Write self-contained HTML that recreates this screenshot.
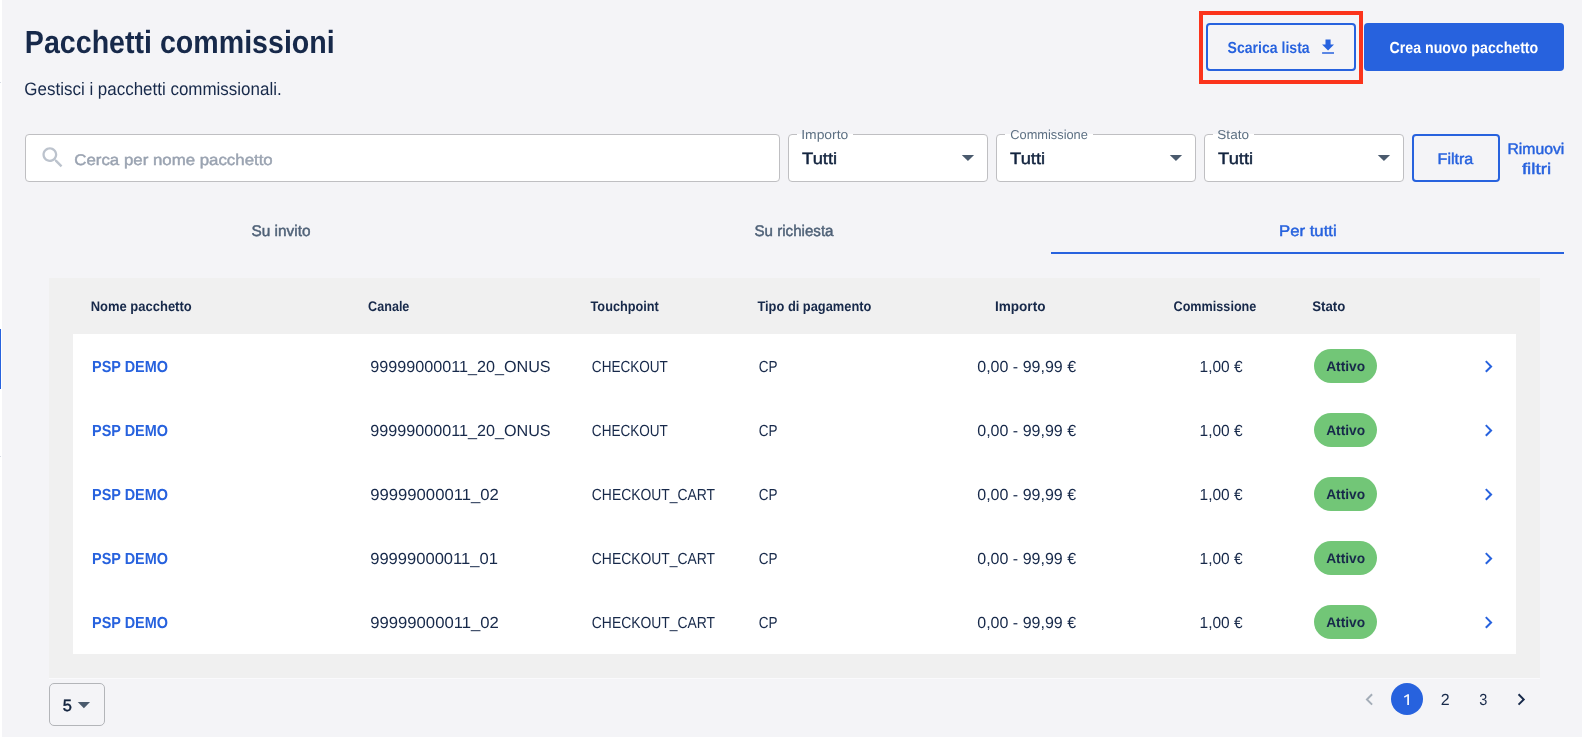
<!DOCTYPE html>
<html lang="it"><head><meta charset="utf-8"><title>Pacchetti commissioni</title>
<style>
html,body{margin:0;padding:0}
body{width:1582px;height:737px;overflow:hidden;position:relative;background:#f4f4f7;font-family:"Liberation Sans",sans-serif}
body>div,body>svg{position:absolute;box-sizing:content-box;display:block}
#tx{left:0;top:0;width:1582px;height:737px;will-change:transform}
#tx span{position:absolute;display:block;white-space:nowrap;transform-origin:0 0;text-rendering:geometricPrecision}
</style></head><body>

<div style="left:0;top:0;width:1.8px;height:737px;background:#fff"></div>
<div style="left:0;top:329px;width:1.2px;height:60px;background:#2762de"></div>
<div style="left:0;top:82px;width:1.3px;height:1px;background:#d6dbe4"></div>
<div style="left:0;top:456px;width:1.3px;height:1px;background:#d6dbe4"></div>
<div style="left:1199px;top:11px;width:156px;height:65px;border:4px solid #fb341c"></div>
<div style="left:1206px;top:23px;width:146px;height:44px;border:2px solid #2762de;border-radius:4px"></div>
<div style="left:1364px;top:23px;width:200px;height:48px;background:#2762de;border-radius:4px"></div>
<div style="left:25px;top:134px;width:753px;height:46px;border:1px solid #bfbfc2;border-radius:4px;background:#fff"></div>
<div style="left:788px;top:134px;width:198px;height:46px;border:1px solid #bfbfc2;border-radius:4px;background:#fff"></div>
<div style="left:796.9px;top:134px;width:56.1px;height:1px;background:#fff"></div>
<div style="left:796.9px;top:126px;width:56.1px;height:8px;background:#f4f4f7"></div>
<div style="left:996px;top:134px;width:198px;height:46px;border:1px solid #bfbfc2;border-radius:4px;background:#fff"></div>
<div style="left:1004.9px;top:134px;width:88.3px;height:1px;background:#fff"></div>
<div style="left:1004.9px;top:126px;width:88.3px;height:8px;background:#f4f4f7"></div>
<div style="left:1204px;top:134px;width:198px;height:46px;border:1px solid #bfbfc2;border-radius:4px;background:#fff"></div>
<div style="left:1212.9px;top:134px;width:41.1px;height:1px;background:#fff"></div>
<div style="left:1212.9px;top:126px;width:41.1px;height:8px;background:#f4f4f7"></div>
<div style="left:1412px;top:134px;width:84px;height:44px;border:2px solid #2762de;border-radius:4px"></div>
<div style="left:1051px;top:252px;width:513px;height:2px;background:#2762de"></div>
<div style="left:49px;top:278px;width:1491px;height:400px;background:#f0f0f0"></div>
<div style="left:49px;top:678px;width:1491px;height:1px;background:#fafafc"></div>
<div style="left:73px;top:334px;width:1443px;height:320px;background:#fff"></div>
<div style="left:1314px;top:349px;width:63.3px;height:34px;border-radius:17px;background:#72c677"></div>
<div style="left:1314px;top:413px;width:63.3px;height:34px;border-radius:17px;background:#72c677"></div>
<div style="left:1314px;top:477px;width:63.3px;height:34px;border-radius:17px;background:#72c677"></div>
<div style="left:1314px;top:541px;width:63.3px;height:34px;border-radius:17px;background:#72c677"></div>
<div style="left:1314px;top:605px;width:63.3px;height:34px;border-radius:17px;background:#72c677"></div>
<div style="left:49px;top:683px;width:54px;height:41px;border:1px solid #b3b5b9;border-radius:5px"></div>
<div style="left:1391px;top:683px;width:32px;height:32px;border-radius:16px;background:#2762de"></div>
<svg style="left:0;top:0" width="1582" height="737" viewBox="0 0 1582 737"><path fill="#2762de" transform="translate(1317.85 36.85) scale(0.8500)" d="M5 20h14v-2H5v2zM19 9h-4V3H9v6H5l7 7 7-7z"/><path fill="#bcc3cd" transform="translate(39.00 143.75) scale(1.1417)" d="M15.5 14h-.79l-.28-.27C15.41 12.59 16 11.11 16 9.5 16 5.91 13.09 3 9.5 3S3 5.91 3 9.5 5.91 16 9.5 16c1.61 0 3.09-.59 4.23-1.57l.27.28v.79l5 4.99L20.49 19l-4.99-5zm-6 0C7.01 14 5 11.99 5 9.5S7.01 5 9.5 5 14 7.01 14 9.5 11.99 14 9.5 14z"/><path fill="#4a5a6d" transform="translate(961.80 154.90) scale(1.0250)" d="M0 0h12L6 6z"/><path fill="#4a5a6d" transform="translate(1169.80 154.90) scale(1.0250)" d="M0 0h12L6 6z"/><path fill="#4a5a6d" transform="translate(1377.80 154.90) scale(1.0250)" d="M0 0h12L6 6z"/><path fill="#2762de" transform="translate(1476.50 354.40) scale(1.0000)" d="M10 6 8.59 7.41 13.17 12l-4.58 4.59L10 18l6-6z"/><path fill="#2762de" transform="translate(1476.50 418.40) scale(1.0000)" d="M10 6 8.59 7.41 13.17 12l-4.58 4.59L10 18l6-6z"/><path fill="#2762de" transform="translate(1476.50 482.40) scale(1.0000)" d="M10 6 8.59 7.41 13.17 12l-4.58 4.59L10 18l6-6z"/><path fill="#2762de" transform="translate(1476.50 546.40) scale(1.0000)" d="M10 6 8.59 7.41 13.17 12l-4.58 4.59L10 18l6-6z"/><path fill="#2762de" transform="translate(1476.50 610.40) scale(1.0000)" d="M10 6 8.59 7.41 13.17 12l-4.58 4.59L10 18l6-6z"/><path fill="#4a5a6d" transform="translate(77.75 702.00) scale(1.0250)" d="M0 0h12L6 6z"/><path fill="#ffffff" fill-opacity="0.94" d="M1409 694.3V705h-1.75v-8.75l-2.75 1.5-.55-1.3 3.6-2.15z"/><path fill="#a4adb8" transform="translate(1357.70 687.65) scale(0.9792)" d="M15.41 7.41 14 6l-6 6 6 6 1.41-1.41L10.83 12z"/><path fill="#17294a" transform="translate(1509.45 687.65) scale(0.9792)" d="M10 6 8.59 7.41 13.17 12l-4.58 4.59L10 18l6-6z"/></svg>
<div id="tx">
<span style="left:24px;top:26px;font-size:32px;line-height:32px;font-weight:700;color:#17294a;transform:translateX(0.84px) scaleX(0.8937);">Pacchetti commissioni</span>
<span style="left:24px;top:80px;font-size:18px;line-height:18px;font-weight:400;color:#17294a;transform:translateX(0.36px) scaleX(0.9421);">Gestisci i pacchetti commissionali.</span>
<span style="left:1227px;top:41px;font-size:16px;line-height:16px;font-weight:700;color:#2762de;transform:translateX(0.59px) scaleX(0.8791);">Scarica lista</span>
<span style="left:1389px;top:41px;font-size:16px;line-height:16px;font-weight:700;color:#ffffff;transform:translateX(0.59px) scaleX(0.8845);">Crea nuovo pacchetto</span>
<span style="left:74px;top:153px;font-size:15.4px;line-height:16px;font-weight:400;color:#9aa3b1;-webkit-text-stroke:0.45px #9aa3b1;transform:translateX(0.32px) scaleX(1.0939);">Cerca per nome pacchetto</span>
<span style="left:801px;top:128px;font-size:13px;line-height:13px;font-weight:400;color:#5c6f82;transform:translateX(0.21px) scaleX(1.0685);">Importo</span>
<span style="left:1010px;top:128px;font-size:13px;line-height:13px;font-weight:400;color:#5c6f82;transform:translateX(0.26px) scaleX(0.9853);">Commissione</span>
<span style="left:1217px;top:128px;font-size:13px;line-height:13px;font-weight:400;color:#5c6f82;transform:translateX(0.33px) scaleX(1.0421);">Stato</span>
<span style="left:802px;top:151px;font-size:16.4px;line-height:17px;font-weight:400;color:#13243f;-webkit-text-stroke:0.45px #13243f;transform:translateX(0.10px) scaleX(1.1201);">Tutti</span>
<span style="left:1010px;top:151px;font-size:16.4px;line-height:17px;font-weight:400;color:#13243f;-webkit-text-stroke:0.45px #13243f;transform:translateX(0.10px) scaleX(1.1201);">Tutti</span>
<span style="left:1218px;top:151px;font-size:16.4px;line-height:17px;font-weight:400;color:#13243f;-webkit-text-stroke:0.45px #13243f;transform:translateX(0.10px) scaleX(1.1201);">Tutti</span>
<span style="left:1437px;top:152px;font-size:15.4px;line-height:16px;font-weight:400;color:#2762de;-webkit-text-stroke:0.45px #2762de;transform:translateX(0.59px) scaleX(1.0428);">Filtra</span>
<span style="left:1507px;top:142px;font-size:15.4px;line-height:16px;font-weight:400;color:#2762de;-webkit-text-stroke:0.45px #2762de;transform:translateX(0.51px) scaleX(1.0214);">Rimuovi</span>
<span style="left:1521px;top:162px;font-size:15.4px;line-height:16px;font-weight:400;color:#2762de;-webkit-text-stroke:0.45px #2762de;transform:translateX(0.89px) scaleX(1.2199);">filtri</span>
<span style="left:251px;top:224px;font-size:15.4px;line-height:16px;font-weight:400;color:#4f6177;-webkit-text-stroke:0.45px #4f6177;transform:translateX(0.51px) scaleX(0.9995);">Su invito</span>
<span style="left:754px;top:224px;font-size:15.4px;line-height:16px;font-weight:400;color:#4f6177;-webkit-text-stroke:0.45px #4f6177;transform:translateX(0.51px) scaleX(0.9822);">Su richiesta</span>
<span style="left:1279px;top:224px;font-size:15.4px;line-height:16px;font-weight:400;color:#2762de;-webkit-text-stroke:0.45px #2762de;transform:translateX(0.05px) scaleX(1.0864);">Per tutti</span>
<span style="left:90px;top:299px;font-size:14px;line-height:14px;font-weight:700;color:#17294a;transform:translateX(0.67px) scaleX(0.9275);">Nome pacchetto</span>
<span style="left:368px;top:299px;font-size:14px;line-height:14px;font-weight:700;color:#17294a;transform:translateX(0.11px) scaleX(0.8987);">Canale</span>
<span style="left:590px;top:299px;font-size:14px;line-height:14px;font-weight:700;color:#17294a;transform:translateX(0.52px) scaleX(0.9092);">Touchpoint</span>
<span style="left:757px;top:299px;font-size:14px;line-height:14px;font-weight:700;color:#17294a;transform:translateX(0.42px) scaleX(0.9180);">Tipo di pagamento</span>
<span style="left:994px;top:299px;font-size:14px;line-height:14px;font-weight:700;color:#17294a;transform:translateX(0.93px) scaleX(0.9701);">Importo</span>
<span style="left:1173px;top:299px;font-size:14px;line-height:14px;font-weight:700;color:#17294a;transform:translateX(0.51px) scaleX(0.9026);">Commissione</span>
<span style="left:1312px;top:299px;font-size:14px;line-height:14px;font-weight:700;color:#17294a;transform:translateX(0.15px) scaleX(0.9462);">Stato</span>
<span style="left:92px;top:360px;font-size:16px;line-height:16px;font-weight:700;color:#2762de;transform:translateX(0.06px) scaleX(0.9009);">PSP DEMO</span>
<span style="left:370px;top:360px;font-size:16px;line-height:16px;font-weight:400;color:#17294a;transform:translateX(0.20px) scaleX(1.0107);">99999000011_20_ONUS</span>
<span style="left:591px;top:360px;font-size:16px;line-height:16px;font-weight:400;color:#17294a;transform:translateX(0.85px) scaleX(0.8467);">CHECKOUT</span>
<span style="left:758px;top:360px;font-size:16px;line-height:16px;font-weight:400;color:#17294a;transform:translateX(0.76px) scaleX(0.8434);">CP</span>
<span style="left:977px;top:360px;font-size:16px;line-height:16px;font-weight:400;color:#17294a;transform:translateX(0.27px) scaleX(1.0004);">0,00 - 99,99 €</span>
<span style="left:1199px;top:360px;font-size:16px;line-height:16px;font-weight:400;color:#17294a;transform:translateX(0.52px) scaleX(0.9674);">1,00 €</span>
<span style="left:1326px;top:359px;font-size:14px;line-height:14px;font-weight:700;color:#17294a;transform:translateX(0.14px) scaleX(0.9821);">Attivo</span>
<span style="left:92px;top:424px;font-size:16px;line-height:16px;font-weight:700;color:#2762de;transform:translateX(0.06px) scaleX(0.9009);">PSP DEMO</span>
<span style="left:370px;top:424px;font-size:16px;line-height:16px;font-weight:400;color:#17294a;transform:translateX(0.20px) scaleX(1.0107);">99999000011_20_ONUS</span>
<span style="left:591px;top:424px;font-size:16px;line-height:16px;font-weight:400;color:#17294a;transform:translateX(0.85px) scaleX(0.8467);">CHECKOUT</span>
<span style="left:758px;top:424px;font-size:16px;line-height:16px;font-weight:400;color:#17294a;transform:translateX(0.76px) scaleX(0.8434);">CP</span>
<span style="left:977px;top:424px;font-size:16px;line-height:16px;font-weight:400;color:#17294a;transform:translateX(0.27px) scaleX(1.0004);">0,00 - 99,99 €</span>
<span style="left:1199px;top:424px;font-size:16px;line-height:16px;font-weight:400;color:#17294a;transform:translateX(0.52px) scaleX(0.9674);">1,00 €</span>
<span style="left:1326px;top:423px;font-size:14px;line-height:14px;font-weight:700;color:#17294a;transform:translateX(0.14px) scaleX(0.9821);">Attivo</span>
<span style="left:92px;top:488px;font-size:16px;line-height:16px;font-weight:700;color:#2762de;transform:translateX(0.06px) scaleX(0.9009);">PSP DEMO</span>
<span style="left:370px;top:488px;font-size:16px;line-height:16px;font-weight:400;color:#17294a;transform:translateX(0.19px) scaleX(1.0425);">99999000011_02</span>
<span style="left:591px;top:488px;font-size:16px;line-height:16px;font-weight:400;color:#17294a;transform:translateX(0.83px) scaleX(0.8678);">CHECKOUT_CART</span>
<span style="left:758px;top:488px;font-size:16px;line-height:16px;font-weight:400;color:#17294a;transform:translateX(0.76px) scaleX(0.8434);">CP</span>
<span style="left:977px;top:488px;font-size:16px;line-height:16px;font-weight:400;color:#17294a;transform:translateX(0.27px) scaleX(1.0004);">0,00 - 99,99 €</span>
<span style="left:1199px;top:488px;font-size:16px;line-height:16px;font-weight:400;color:#17294a;transform:translateX(0.52px) scaleX(0.9674);">1,00 €</span>
<span style="left:1326px;top:487px;font-size:14px;line-height:14px;font-weight:700;color:#17294a;transform:translateX(0.14px) scaleX(0.9821);">Attivo</span>
<span style="left:92px;top:552px;font-size:16px;line-height:16px;font-weight:700;color:#2762de;transform:translateX(0.06px) scaleX(0.9009);">PSP DEMO</span>
<span style="left:370px;top:552px;font-size:16px;line-height:16px;font-weight:400;color:#17294a;transform:translateX(0.19px) scaleX(1.0350);">99999000011_01</span>
<span style="left:591px;top:552px;font-size:16px;line-height:16px;font-weight:400;color:#17294a;transform:translateX(0.83px) scaleX(0.8678);">CHECKOUT_CART</span>
<span style="left:758px;top:552px;font-size:16px;line-height:16px;font-weight:400;color:#17294a;transform:translateX(0.76px) scaleX(0.8434);">CP</span>
<span style="left:977px;top:552px;font-size:16px;line-height:16px;font-weight:400;color:#17294a;transform:translateX(0.27px) scaleX(1.0004);">0,00 - 99,99 €</span>
<span style="left:1199px;top:552px;font-size:16px;line-height:16px;font-weight:400;color:#17294a;transform:translateX(0.52px) scaleX(0.9674);">1,00 €</span>
<span style="left:1326px;top:551px;font-size:14px;line-height:14px;font-weight:700;color:#17294a;transform:translateX(0.14px) scaleX(0.9821);">Attivo</span>
<span style="left:92px;top:616px;font-size:16px;line-height:16px;font-weight:700;color:#2762de;transform:translateX(0.06px) scaleX(0.9009);">PSP DEMO</span>
<span style="left:370px;top:616px;font-size:16px;line-height:16px;font-weight:400;color:#17294a;transform:translateX(0.19px) scaleX(1.0425);">99999000011_02</span>
<span style="left:591px;top:616px;font-size:16px;line-height:16px;font-weight:400;color:#17294a;transform:translateX(0.83px) scaleX(0.8678);">CHECKOUT_CART</span>
<span style="left:758px;top:616px;font-size:16px;line-height:16px;font-weight:400;color:#17294a;transform:translateX(0.76px) scaleX(0.8434);">CP</span>
<span style="left:977px;top:616px;font-size:16px;line-height:16px;font-weight:400;color:#17294a;transform:translateX(0.27px) scaleX(1.0004);">0,00 - 99,99 €</span>
<span style="left:1199px;top:616px;font-size:16px;line-height:16px;font-weight:400;color:#17294a;transform:translateX(0.52px) scaleX(0.9674);">1,00 €</span>
<span style="left:1326px;top:615px;font-size:14px;line-height:14px;font-weight:700;color:#17294a;transform:translateX(0.14px) scaleX(0.9821);">Attivo</span>
<span style="left:62px;top:698px;font-size:16.4px;line-height:17px;font-weight:400;color:#13243f;-webkit-text-stroke:0.45px #13243f;transform:translateX(0.84px) scaleX(1.0053);">5</span>
<span style="left:1440px;top:693px;font-size:16px;line-height:16px;font-weight:400;color:#17294a;transform:translateX(0.69px) scaleX(1.0008);">2</span>
<span style="left:1479px;top:693px;font-size:16px;line-height:16px;font-weight:400;color:#17294a;transform:translateX(0.14px) scaleX(0.9072);">3</span>
</div>
</body></html>
